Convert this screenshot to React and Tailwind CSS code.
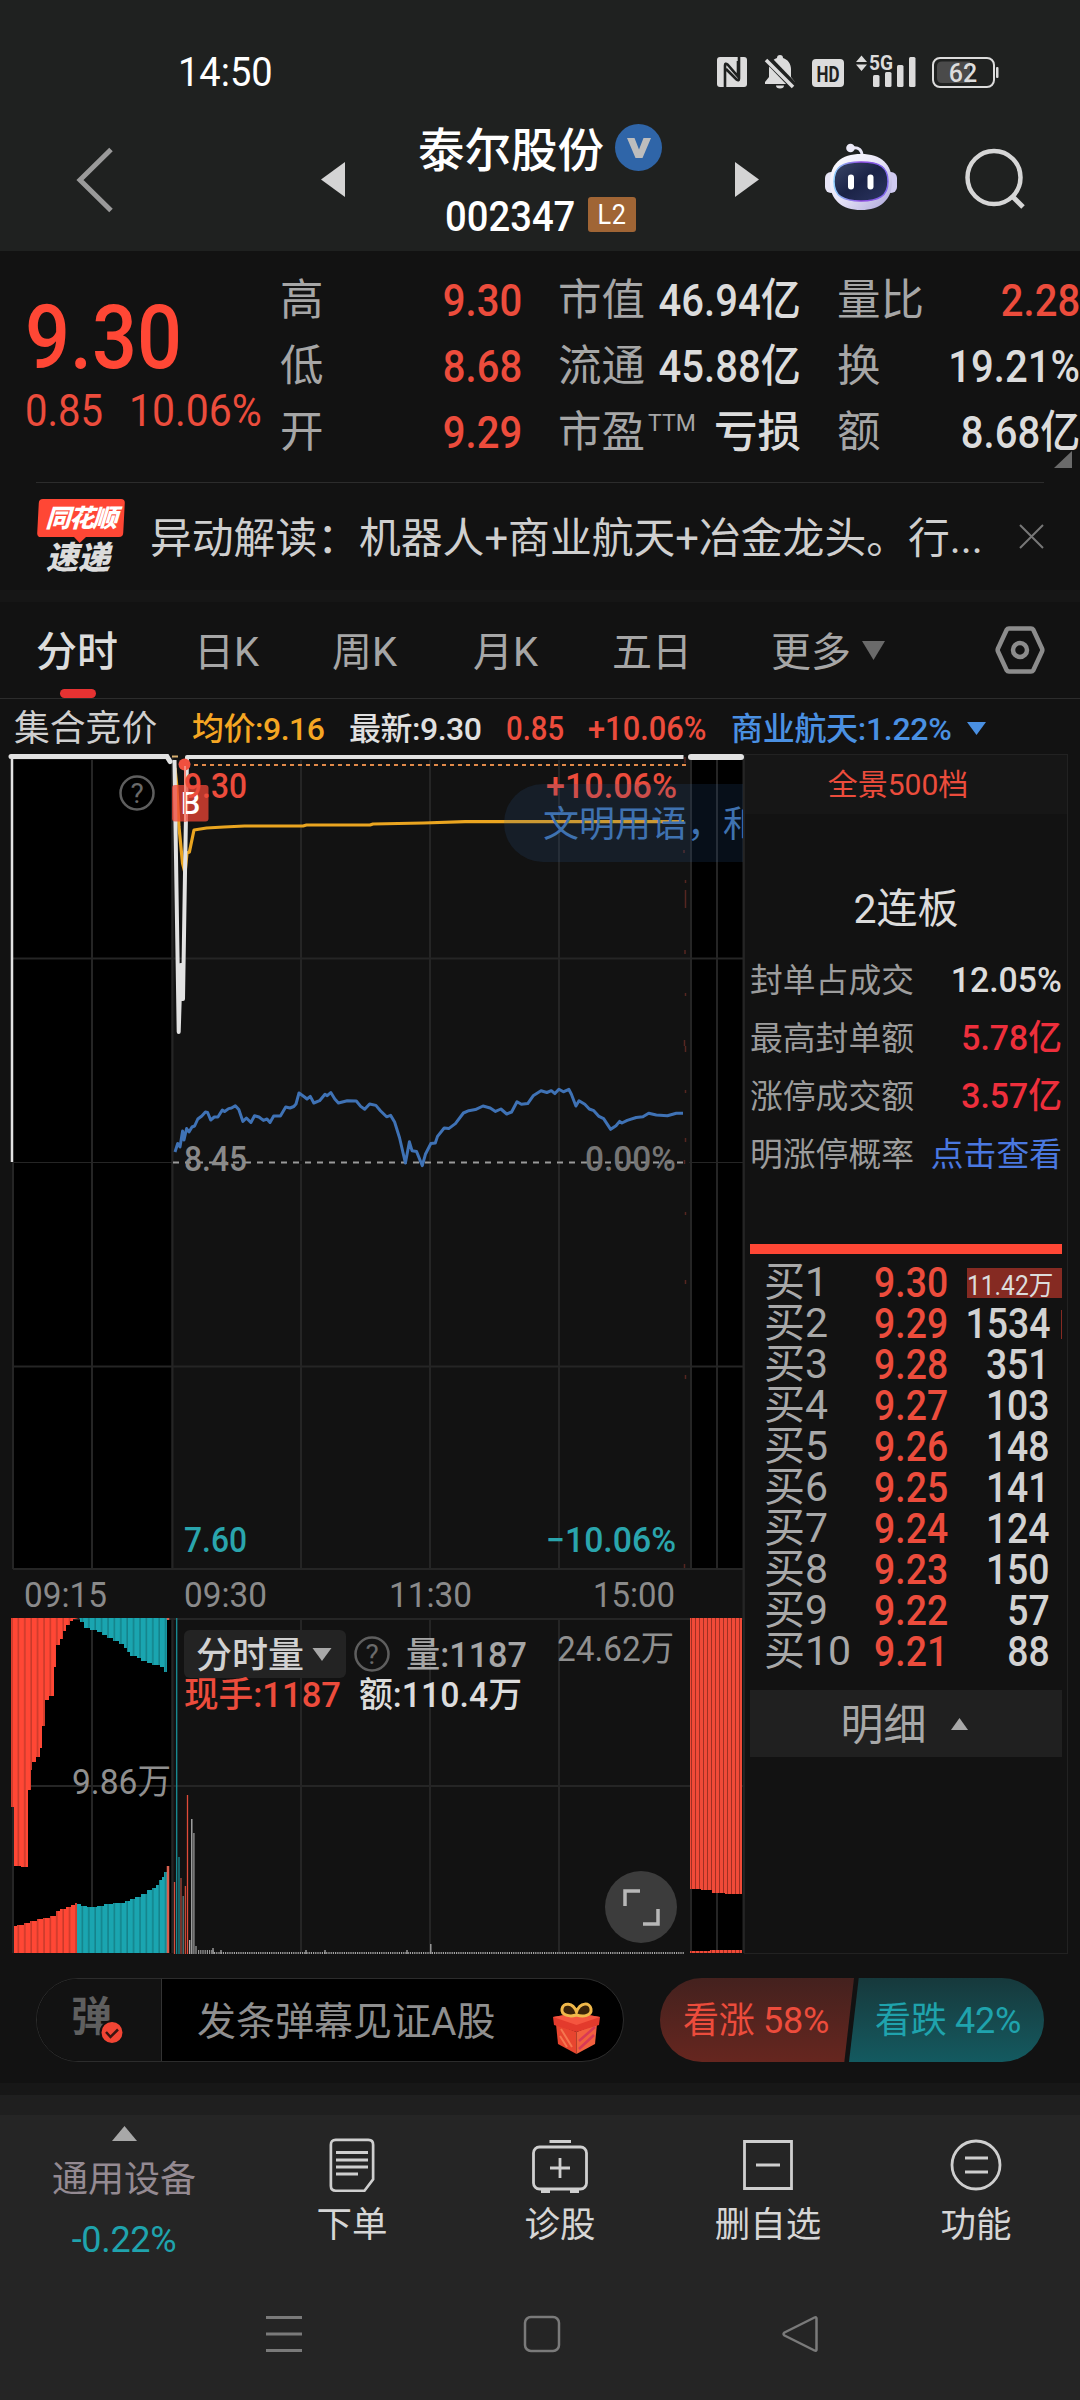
import clsx from 'clsx';

const quoteColumns = [
  {
    width: 'w-[242px]',
    rows: [
      { label: '高', value: '9.30', up: true },
      { label: '低', value: '8.68', up: true },
      { label: '开', value: '9.29', up: true },
    ],
  },
  {
    width: 'w-[243px] ml-[36px]',
    rows: [
      { label: '市值', value: '46.94亿' },
      { label: '流通', value: '45.88亿' },
      { label: '市盈', sup: 'TTM', value: '亏损', wide: true },
    ],
  },
  {
    width: 'w-[243px] ml-[36px]',
    rows: [
      { label: '量比', value: '2.28', up: true },
      { label: '换', value: '19.21%' },
      { label: '额', value: '8.68亿' },
    ],
  },
];

const tabs = [
  { name: '分时', className: 'w-[165px] pl-[36px] text-[41px]' },
  { name: '日K', className: 'w-[136px] pl-[29px]' },
  { name: '周K', className: 'w-[141px] pl-[31px]' },
  { name: '月K', className: 'w-[141px] pl-[31px]' },
  { name: '五日', className: 'w-[160px] pl-[29px]' },
];

const limitStats = [
  { label: '封单占成交', value: '12.05%', color: 'text-[#dcdcdc]' },
  { label: '最高封单额', value: '5.78亿', color: 'text-[#ee2f3c]' },
  { label: '涨停成交额', value: '3.57亿', color: 'text-[#ee2f3c]' },
];

const bids = [
  ['买1', '9.30', '11.42万'],
  ['买2', '9.29', '1534'],
  ['买3', '9.28', '351'],
  ['买4', '9.27', '103'],
  ['买5', '9.26', '148'],
  ['买6', '9.25', '141'],
  ['买7', '9.24', '124'],
  ['买8', '9.23', '150'],
  ['买9', '9.22', '57'],
  ['买10', '9.21', '88'],
];

const sectorLine =
  '175,1152 177.7,1143.5 180,1147 182.6,1131 184,1140 186.6,1128.5 189,1132 192,1127 194.6,1126 197.8,1119 201.8,1116 205.4,1112 207.6,1112.5 210.7,1120 214.3,1117 217.9,1117 222.3,1110 224.6,1111.5 228.6,1108.6 231.5,1108 235.3,1105.7 238.8,1109.6 242.9,1121.4 246.4,1118 250.9,1122.5 254.5,1115.7 259,1117 263.4,1120.4 267,1119 270,1122.5 273.7,1116 280.4,1116 285.7,1107 290,1108 293.8,1106.5 296,1104 299,1093 304.5,1097 307,1099 310.3,1096.4 313.8,1103 319.6,1100.7 325,1094.3 327.2,1095.7 330.8,1092.5 334.8,1099 338.4,1103 347.3,1100.7 356.3,1101 360.7,1106.4 364.7,1109.3 369.6,1104 375.9,1105.4 380.4,1110.7 386.6,1116.8 390.6,1115.4 394.6,1122 399.6,1138 405.4,1163 409.4,1141.8 412,1150.7 416.5,1151.4 422.3,1165.7 425.4,1154.3 430.8,1143.6 435.3,1143 437.5,1136.4 444.2,1128 448.7,1128.6 455.4,1123.6 463.4,1113 468.8,1110.7 475.4,1109.6 483,1106 490.2,1108 495.5,1111.4 500.9,1109 506.7,1114 511.6,1112 517,1101.8 521.4,1104.3 527.7,1103.6 533.5,1095.4 541,1090.7 546.9,1092.5 551.3,1090.7 554.9,1093.6 558.9,1089.3 563.4,1091.8 568.8,1089.3 571.4,1094.3 575.9,1106 579,1100.7 584.8,1104.3 589.3,1109 593.8,1110.7 599,1116.4 603.6,1118.6 610.7,1129.3 616,1125.7 619.6,1121.4 621.9,1123 627.2,1120.4 636.2,1117.5 642.9,1116.8 648.7,1113.2 656.3,1115 667.4,1115.7 676.3,1113.2 683,1113.2';

const averageLine =
  '175,768 176.7,785 179,827 182.5,863 185,873 187,853 189.4,852 194,830 206.6,828 224,827 244.5,826 303,826 306.5,825 370,825 373,824 423.6,823 465,821.7 684,821.7';

// [x, top, color]
const openingBars = [
  [174.5, 1882, '#d0503f'],
  [176.7, 1618, '#1a8f98'],
  [179, 1857, '#1a8f98'],
  [181, 1878, '#a5493e'],
  [183.2, 1896, '#5c7f80'],
  [185.4, 1886, '#c94635'],
  [187.5, 1795, '#e04a38'],
  [189.7, 1940, '#b5b5b5'],
  [191.8, 1819, '#b5b5b5'],
  [193.9, 1833, '#999'],
  [196, 1946, '#999'],
  [213, 1948, '#aaa'],
  [221, 1950, '#aaa'],
  [306, 1950, '#aaa'],
  [325, 1950, '#aaa'],
  [407, 1950, '#aaa'],
  [430.8, 1944, '#aaa'],
];

function Num({ className, right, wide, children }) {
  return (
    <span
      className={clsx(
        'inline-block whitespace-nowrap',
        wide ? 'scale-x-[0.95]' : 'scale-x-[0.89]',
        right ? 'origin-right' : 'origin-left',
        className
      )}
    >
      {children}
    </span>
  );
}

function StatusIcons() {
  return (
    <svg width="284" height="40" viewBox="716 52 284 40" fill="#dcdcdc">
      <rect x="717" y="57" width="30" height="30" rx="3" />
      <path d="M725 87V65.500q0-3 2.500-1L738 76.500V61M739 57v21.500q0 3-2.500 1L726 69" fill="none" stroke="#1f2120" strokeWidth="2.600" />
      <path d="M780 55a3 3 0 0 1 3 3c5 1.500 8 6 8 11v8l4 5v2h-30v-2l4-5v-8c0-5 3-9.500 8-11a3 3 0 0 1 3-3z" />
      <path d="M776 85.500h8a4 3 0 0 1-8 0z" />
      <path d="M766 57.500l28 29" stroke="#1f2120" strokeWidth="8" />
      <path d="M766 60l27 27" stroke="#dcdcdc" strokeWidth="3.500" />
      <rect x="812" y="59" width="32" height="28" rx="4" />
      <text x="828" y="81.500" textAnchor="middle" fontSize="22" fontWeight="700" fill="#1f2120" textLength="23" lengthAdjust="spacingAndGlyphs">HD</text>
      <path d="M856 62l5.500-6.500 5.500 6.500zM856 64.500h11l-5.500 6.500z" />
      <text x="869" y="70" fontSize="20" fontWeight="700" textLength="24" lengthAdjust="spacingAndGlyphs">5G</text>
      <rect x="873" y="75" width="6.500" height="12" rx="1.500" />
      <rect x="885" y="72" width="6.500" height="15" rx="1.500" />
      <rect x="897" y="65" width="6.500" height="22" rx="1.500" />
      <rect x="909" y="57" width="6.500" height="30" rx="1.500" />
      <rect x="933" y="58" width="61" height="29" rx="7" fill="none" stroke="#dcdcdc" strokeWidth="2" />
      <path d="M942 61.500h28v21.500h-28q-5 0-5-5v-11.500q0-5 5-5z" fill="#4a4a4a" />
      <rect x="996" y="67" width="2.500" height="11" rx="1" />
      <text x="963" y="81.500" textAnchor="middle" fontSize="25" fontWeight="500">62</text>
    </svg>
  );
}

function Robot() {
  return (
    <svg width="74" height="68" viewBox="0 0 74 68">
      <defs>
        <linearGradient id="shell" x1="0" y1="0" x2="1" y2="1">
          <stop offset="0" stopColor="#fff" />
          <stop offset="0.5" stopColor="#e6e3f7" />
          <stop offset="1" stopColor="#a9a3d8" />
        </linearGradient>
        <linearGradient id="visor" x1="0" y1="0" x2="1" y2="1">
          <stop offset="0" stopColor="#3b4667" />
          <stop offset="0.5" stopColor="#1b2347" />
          <stop offset="1" stopColor="#2b3560" />
        </linearGradient>
        <linearGradient id="rim" x1="0" y1="0" x2="1" y2="0">
          <stop offset="0" stopColor="#8fd0ff" />
          <stop offset="0.5" stopColor="#8e4be0" />
          <stop offset="1" stopColor="#7f6bf0" />
        </linearGradient>
      </defs>
      <path d="M28 5c7-1 10 2 10 8" fill="none" stroke="#e8e6f6" strokeWidth="3" />
      <circle cx="26.500" cy="5" r="4.300" fill="#eceaf8" />
      <rect x="1" y="29" width="12" height="21" rx="6" fill="#e6e4f5" />
      <rect x="61" y="29" width="12" height="21" rx="6" fill="#cfcaf0" />
      <path d="M37 11c20 0 31 10 31 28S56 67 37 67 6 57 6 39s11-28 31-28z" fill="url(#shell)" />
      <path d="M37 19c19 0 27 5 27 19.500S55 58 37 58 10 53 10 38.500 18 19 37 19z" fill="url(#visor)" stroke="url(#rim)" strokeWidth="1.500" />
      <rect x="24" y="31.500" width="6" height="15" rx="3" fill="#fff" />
      <rect x="43.500" y="31.500" width="6" height="15" rx="3" fill="#fff" />
    </svg>
  );
}

function Header() {
  return (
    <header className="h-[251px] bg-[#1f2120] text-white">
      <div className="flex h-[104px] items-start justify-between pl-[178px] pr-[80px] pt-[52px]">
        <Num wide className="text-[40px] leading-[42px]">14:50</Num>
        <StatusIcons />
      </div>
      <div className="flex h-[147px] items-start">
        <svg className="ml-[74px] mt-[43px]" width="42" height="66" viewBox="0 0 42 66" fill="none" stroke="#9a9a9a" strokeWidth="5">
          <path d="M37 2.500L6 33l31 30.500" />
        </svg>
        <svg className="ml-[205px] mt-[58px]" width="24" height="35" viewBox="0 0 24 35" fill="#d4d4d4">
          <path d="M24 0v35L0 17.500z" />
        </svg>
        <div className="flex w-[390px] flex-col">
          <div className="flex items-start pl-[73px] pt-[20px]">
            <span className="mt-[2px] text-[46.5px] font-medium leading-[50px]">泰尔股份</span>
            <span className="ml-[11px] flex size-[47px] items-center justify-center rounded-full bg-[#2f65a8]">
              <svg width="24" height="20" viewBox="0 0 24 20" fill="#bdbdbd">
                <path d="M0 0h7.500L12 11.500 16.500 0H24L15.500 20h-7z" />
              </svg>
            </span>
          </div>
          <div className="flex items-start pl-[100px] pt-[21px]">
            <span className="w-[143px]">
              <Num className="scale-x-[0.91] text-[42px] font-medium leading-[39px]">002347</Num>
            </span>
            <span className="flex h-[35px] w-[48px] items-center justify-center rounded-[3px] bg-[#a06535]">
              <span className="scale-x-90 text-[28px] leading-none tracking-wide">L2</span>
            </span>
          </div>
        </div>
        <svg className="mt-[58px]" width="24" height="35" viewBox="0 0 24 35" fill="#d4d4d4">
          <path d="M0 0v35l24-17.500z" />
        </svg>
        <div className="ml-[65px] mt-[39px]">
          <Robot />
        </div>
        <svg className="ml-[66px] mt-[43px]" width="64" height="64" viewBox="0 0 64 64" fill="none" stroke="#d6d6d6" strokeWidth="4.500">
          <circle cx="30" cy="30.500" r="26.500" />
          <path d="M48 49l11 11" strokeWidth="5" />
        </svg>
      </div>
    </header>
  );
}

function Quote() {
  return (
    <section className="h-[232px]">
      <div className="flex h-[231px]">
        <div className="flex w-[280px] flex-col pl-[25px] text-[#ff4735]">
          <Num className="mt-[42px] w-[150px] text-[89px] font-medium leading-[90px]">9.30</Num>
          <div className="mt-[3px] flex text-[45px] leading-[50px] text-[#ec4c3c]">
            <span className="w-[104px]">
              <Num>0.85</Num>
            </span>
            <Num className="scale-x-[0.91]">10.06%</Num>
          </div>
        </div>
        {quoteColumns.map((col, i) => (
          <div key={i} className={clsx('flex shrink-0 flex-col pt-[17px]', col.width)}>
            {col.rows.map((row) => (
              <div key={row.label} className="flex h-[66px] items-center justify-between whitespace-nowrap text-[43.5px] leading-[66px]">
                <span className="flex shrink-0 text-[#a6a6a6]">
                  {row.label}
                  {row.sup && <span className="ml-[3px] mt-[-9px] text-[23px]">{row.sup}</span>}
                </span>
                {row.wide ? (
                  <span className="font-medium text-[#dcdcdc]">{row.value}</span>
                ) : (
                  // the unscaled box may be wider than the room left by the label
                  <span className="flex w-0 grow justify-end">
                    <Num right className={clsx('text-[45px] font-medium', row.up ? 'text-[#ec4c3c]' : 'text-[#dcdcdc]')}>
                      {row.value}
                    </Num>
                  </span>
                )}
              </div>
            ))}
          </div>
        ))}
        <svg className="absolute left-[1054px] top-[451px]" width="18" height="17" viewBox="0 0 18 17" fill="#6a6a6a">
          <path d="M18 0v17H0z" />
        </svg>
      </div>
      <div className="mx-[36px] h-px bg-[#2c2c2c]" />
    </section>
  );
}

function News() {
  return (
    <section className="flex h-[107px] items-start">
      <div className="ml-[36px] mt-[16px] flex w-[90px] flex-col items-center italic">
        <div className="relative flex h-[38px] w-[86px] -skew-x-3 items-center justify-center rounded-[4px] bg-[#ff4735] text-[25px] font-black leading-none tracking-[-1.5px] text-white">
          同花顺
          <svg className="absolute left-[36px] top-[37px]" width="14" height="7" viewBox="0 0 14 7" fill="#ff4735">
            <path d="M0 0h14L7 7z" />
          </svg>
        </div>
        <div className="mt-[4px] pr-[6px] text-[32px] font-black leading-[34px] text-[#dcdcdc]">速递</div>
      </div>
      <div className="ml-[24px] mt-[31px] w-[868px] whitespace-nowrap text-[41.8px] leading-[50px] text-[#cfcfcf]">
        异动解读：机器人+商业航天+冶金龙头。行...
      </div>
      <svg className="mt-[40px]" width="27" height="27" viewBox="0 0 27 27" fill="none" stroke="#777" strokeWidth="2">
        <path d="M2 2l23 23M25 2L2 25" />
      </svg>
    </section>
  );
}

function Tabs() {
  return (
    <nav className="flex h-[97px] border-b border-[#2c2c2c] text-[40px] leading-[101px] text-[#a6a6a6]">
      {tabs.map((tab, i) => (
        <div key={tab.name} className={clsx('relative shrink-0 whitespace-nowrap', tab.className, i === 0 && 'font-medium text-[#dcdcdc]')}>
          {tab.name}
          {i === 0 && <span className="absolute bottom-0 left-[60px] h-[9px] w-[36px] rounded-full bg-[#e63232]" />}
        </div>
      ))}
      <div className="flex w-[225px] items-start pl-[28px]">
        更多
        <svg className="ml-[11px] mt-[39px]" width="23" height="19" viewBox="0 0 23 19" fill="#6a6a6a">
          <path d="M0 0h23L11.500 19z" />
        </svg>
      </div>
      <svg className="ml-[27px] mt-[24px]" width="50" height="48" viewBox="0 0 50 48" fill="none" stroke="#8c8c8c" strokeWidth="4.500" strokeLinejoin="round">
        <path d="M14 2.500h22q1.500 0 2.300 1.300L47 22.500q.7 1.500 0 3L38.300 44.200Q37.500 45.500 36 45.500H14q-1.500 0-2.300-1.300L3 25.500q-.7-1.500 0-3L11.700 3.800Q12.500 2.500 14 2.500z" />
        <circle cx="25" cy="24" r="7" />
      </svg>
    </nav>
  );
}

function Legend() {
  return (
    <div className="flex h-[55px] items-start whitespace-nowrap text-[32px] font-medium leading-[60px]">
      <span className="w-[192px] pl-[14px] text-[35.8px] font-normal leading-[61px] text-[#cfcfcf]">集合竞价</span>
      <span className="w-[157px] tracking-[-0.5px] text-[#f5a623]">均价:9.16</span>
      <span className="w-[157px] tracking-[-0.5px] text-[#e0e0e0]">最新:9.30</span>
      <span className="w-[82px] text-[#ec4c3c]">
        <Num className="text-[33px]">0.85</Num>
      </span>
      <span className="w-[143px] text-[#ec4c3c]">
        <Num className="scale-x-[0.92] text-[33.5px]">+10.06%</Num>
      </span>
      <span className="w-[224px] tracking-[-0.3px] text-[#4a90e2]">商业航天:1.22%</span>
      <svg className="ml-[12px] mt-[23px]" width="19" height="13" viewBox="0 0 19 13" fill="#4a90e2">
        <path d="M0 0h19L9.500 13z" />
      </svg>
    </div>
  );
}

function Label({ x, y, w, fill, size = 35, weight = 500, children }) {
  return (
    <text x={x} y={y} fontSize={size} fontWeight={weight} fill={fill} textLength={w} lengthAdjust="spacingAndGlyphs">
      {children}
    </text>
  );
}

function Chart() {
  return (
    <svg className="block shrink-0" width="744" height="1201" viewBox="0 754 744 1201">
      <defs>
        <pattern id="redStripe" width="6.400" height="10" patternUnits="userSpaceOnUse">
          <rect width="6.400" height="10" fill="#ff4735" />
          <rect x="5" width="1.200" height="10" fill="#b93628" />
        </pattern>
        <pattern id="tealStripe" width="6.400" height="10" patternUnits="userSpaceOnUse">
          <rect width="6.400" height="10" fill="#1aa5b0" />
          <rect x="5" width="1.200" height="10" fill="#127880" />
        </pattern>
        <pattern id="tailStripe" width="4" height="10" patternUnits="userSpaceOnUse">
          <rect width="4" height="10" fill="#f04a38" />
          <rect x="3" width="1" height="10" fill="#9f2f22" />
        </pattern>
        <clipPath id="plot">
          <rect x="12" y="754" width="731" height="1201" />
        </clipPath>
      </defs>

      {/* call auction zones */}
      <g fill="#000">
        <rect x="13" y="760" width="158" height="809" />
        <rect x="690" y="760" width="53" height="809" />
        <rect x="13" y="1619" width="158" height="334" />
        <rect x="690" y="1619" width="53" height="334" />
      </g>

      <g stroke="#252525" strokeWidth="2">
        {[92, 301, 430, 559, 717].map((x) => (
          <path key={x} d={`M${x} 760V1569M${x} 1619V1953`} />
        ))}
        {[958.5, 1162.5, 1366.5, 1569, 1619, 1786].map((y) => (
          <path key={y} d={`M13 ${y}H744`} strokeWidth={y === 1162.5 ? 1 : 2} />
        ))}
        <path d="M172.500 757V1569M172.500 1619V1953M691 760V1569M691 1619V1953M743.500 757V1953M13 1162V1569M13 1619V1953" strokeWidth="2" />
      </g>
      <rect x="174" y="1161" width="515" height="3" fill="#121212" />
      <path d="M173 1162.500H684" stroke="#9a9a9a" strokeWidth="2" strokeDasharray="6 6" />

      <path d="M685 757v6M684 850v3M685.500 880v3M685.500 890v18M685 950v4M685.500 993v3M684.500 1040v6M685.500 1046v6M685.500 1090v3M685.500 1138v4M684.500 1160v4M685.500 1212v3M685.500 1280v4M685.500 1375v4M684.500 1564v4" stroke="#552620" strokeWidth="1.500" />

      {/* prices */}
      <path d="M12 758V1162" stroke="#e2e2e2" strokeWidth="2.500" />
      <path d="M11 756.500H167l3 5" fill="none" stroke="#e2e2e2" strokeWidth="5" strokeLinecap="round" />
      <path d="M691 757H741" stroke="#e2e2e2" strokeWidth="6" strokeLinecap="round" />
      <path d="M186 765H689" stroke="#e08a4a" strokeWidth="2" strokeDasharray="4 4" />
      <path d="M172 756.500h6" stroke="#d8b070" strokeWidth="2" />
      <polyline points={averageLine} fill="none" stroke="#eaa520" strokeWidth="3.200" strokeLinejoin="round" />
      <polyline points="174.5,760 178.7,1032 180.8,965 183,999 185,873 187,757 683.500,757" fill="none" stroke="#e2e2e2" strokeWidth="4" strokeLinejoin="round" />
      <polyline points={sectorLine} fill="none" stroke="#3f72b5" strokeWidth="3" strokeLinejoin="round" />

      <circle cx="137" cy="793" r="16.500" fill="none" stroke="#5e5e5e" strokeWidth="2.500" />
      <text x="137" y="803" fontSize="28" fill="#6a6a6a" textAnchor="middle">?</text>

      <circle cx="184.500" cy="764.500" r="6" fill="#f0503f" />
      <rect x="172" y="785" width="36.500" height="36.500" rx="3" fill="#f04535" fillOpacity="0.75" />
      <text x="190.500" y="813.500" fontSize="31" fontWeight="500" fill="#fff" textAnchor="middle">B</text>
      <path d="M185 766V822" stroke="#f58a7c" strokeWidth="2" />

      <Label x={184} y={798} w={63} fill="#ec4c3c">9.30</Label>
      <Label x={546} y={798} w={131} fill="#ec4c3c">+10.06%</Label>
      <Label x={184} y={1171} w={63} fill="#8a8a8a">8.45</Label>
      <Label x={585} y={1171} w={91} fill="#757575">0.00%</Label>
      <Label x={184} y={1552} w={63} fill="#2aa5ad">7.60</Label>
      <Label x={546} y={1552} w={130} fill="#2aa5ad">−10.06%</Label>

      <g clipPath="url(#plot)">
        <rect x="504" y="784" width="300" height="78" rx="39" fill="#2a5c9c" fillOpacity="0.16" />
        <text x="543" y="837" fontSize="36" fill="#3f72b0">文明用语，和</text>
      </g>

      <Label x={24} y={1607} w={83} fill="#8a8a8a" weight={400}>09:15</Label>
      <Label x={184} y={1607} w={83} fill="#8a8a8a" weight={400}>09:30</Label>
      <Label x={389} y={1607} w={83} fill="#8a8a8a" weight={400}>11:30</Label>
      <Label x={593} y={1607} w={82} fill="#8a8a8a" weight={400}>15:00</Label>

      {/* volume */}
      <path
        d="M11 1618H78L76 1619H73V1621H70V1625H66V1631H63V1639H60V1645H56V1667H54V1696H49V1700H45V1726H42V1748H40V1757H36V1762H32V1770H31V1790H28V1867H21V1866H14V1807H11z"
        fill="url(#redStripe)"
      />
      <path
        d="M79 1618H167V1672H164V1667H160V1665H152V1663H147V1661H141V1658H137V1656H130V1652H127V1648H124V1644H119V1641H113V1638H107V1635H102V1632H97V1630H90V1628H84V1622H80V1619z"
        fill="url(#tealStripe)"
      />
      <path
        d="M14 1953V1926H17V1925H24V1923H30V1921H37V1919H43V1918H50V1916H56V1911H60V1909H66V1907H71V1905H75V1903H77V1953z"
        fill="url(#redStripe)"
      />
      <path
        d="M77 1953V1904H81V1906H87V1907H97V1906H104V1904H113V1903H125V1901H130V1899H135V1897H141V1894H147V1890H152V1888H156V1885H159V1880H162V1877H164V1872H167V1953z"
        fill="url(#tealStripe)"
      />
      <path d="M168 1866V1953M168 1618v2" stroke="#d8604f" strokeWidth="2.500" />
      <path d="M690 1618H742V1894H725V1893H712V1890H701V1889H690zM690 1953v-2h20v-1h32v3z" fill="url(#tailStripe)" />
      {openingBars.map(([x, top, color]) => (
        <path key={x} d={`M${x} ${top}V1954`} stroke={color} strokeWidth="1.300" />
      ))}
      <path d="M198 1952H214" stroke="#999" strokeWidth="4" strokeDasharray="1.200 1" />
      <path d="M214 1953H684" stroke="#a5a5a5" strokeWidth="2" strokeDasharray="1.200 1" />

      <Label x={72} y={1794} w={99} fill="#8f8f8f" weight={400}>9.86万</Label>
      <Label x={557} y={1661} w={117} fill="#8f8f8f" weight={400}>24.62万</Label>

      <rect x="184" y="1630" width="162" height="48" rx="6" fill="#232323" />
      <Label x={196} y={1668} w={108} fill="#d2d2d2" size={36}>分时量</Label>
      <path d="M312.500 1648h19l-9.500 13z" fill="#a8a8a8" />
      <circle cx="372" cy="1654" r="16.500" fill="none" stroke="#5e5e5e" strokeWidth="2.500" />
      <text x="372" y="1664" fontSize="28" fill="#6a6a6a" textAnchor="middle">?</text>
      <Label x={406} y={1667} w={121} fill="#a6a6a6">量:1187</Label>
      <Label x={184} y={1707} w={157} fill="#ec4c3c">现手:1187</Label>
      <Label x={359} y={1707} w={163} fill="#dcdcdc">额:110.4万</Label>

      <circle cx="641" cy="1907" r="36" fill="#3c3c3c" />
      <path d="M625 1906V1891H640M643 1924H658V1909" fill="none" stroke="#b8b8b8" strokeWidth="3.500" />
    </svg>
  );
}

function OrderBook() {
  return (
    <aside className="flex h-[1200px] w-[324px] flex-col border border-[#222]">
      <div className="flex h-[59px] items-center justify-center bg-[#161616] pr-[16px] text-[30px] text-[#ec4c3c]">全景500档</div>
      <div className="mt-[60px] h-[70px] text-center text-[41px] leading-[70px] text-[#dcdcdc]">2连板</div>
      <div className="mt-[8px] flex flex-col pl-[5px] pr-[5px] text-[32.8px] leading-[58px]">
        {limitStats.map((item) => (
          <div key={item.label} className="flex h-[58px] items-start justify-between text-[#9c9c9c]">
            {item.label}
            <Num right wide className={clsx('-mt-px text-[35.5px] font-medium', item.color)}>
              {item.value}
            </Num>
          </div>
        ))}
        <div className="flex h-[58px] items-start justify-between text-[#9c9c9c]">
          明涨停概率
          <span className="text-[32.8px] text-[#4a78e0]">点击查看</span>
        </div>
      </div>
      <div className="mx-[5px] mt-[60px] h-[10px] shrink-0 bg-[#ff4735]" />
      <div className="mt-[8px] flex flex-col pl-[5px]">
        {bids.map(([name, price, amount], i) => (
          <div key={name} className="flex h-[41px] items-start leading-[41px]">
            <span className="w-[124px] whitespace-nowrap pl-[14px] text-[41px] text-[#a8a8a8]">{name}</span>
            <span className="w-[93px]">
              <Num className="text-[42px] font-medium text-[#ec4c3c]">{price}</Num>
            </span>
            {i === 0 ? (
              <span className="mt-[6px] flex h-[30px] w-[95px] items-center bg-[#852a22] pt-[6px] text-[#dcdcdc]">
                <Num className="scale-x-[0.91] text-[27px]">{amount}</Num>
              </span>
            ) : (
              <span className="flex w-[95px] justify-end pr-[12px]">
                <Num right className="scale-x-[0.89] text-[42px] font-medium text-[#d2d2d2]">
                  {amount}
                </Num>
                {i === 1 && <span className="-mr-[12px] ml-[11px] mt-[7px] h-[29px] w-px shrink-0 bg-[#852a22]" />}
              </span>
            )}
          </div>
        ))}
      </div>
      <div className="mx-[5px] mt-[18px] flex h-[67px] items-center justify-center bg-[#202020] text-[43px] leading-none text-[#a8a8a8]">
        <span className="mt-[4px]">明细</span>
        <svg className="ml-[24px] mr-[4px]" width="17" height="12" viewBox="0 0 17 12" fill="#a8a8a8">
          <path d="M8.500 0L17 12H0z" />
        </svg>
      </div>
    </aside>
  );
}

function Gift() {
  return (
    <svg width="49" height="52" viewBox="0 0 49 52">
      <path d="M4 22l20.500 8v22L6 42z" fill="#e8452f" />
      <path d="M45 22l-20.500 8v22L43 42z" fill="#f2603f" />
      <path d="M1 15l23.500-4L48 15l-1 8-22.500 7L2 23z" fill="#e33a2c" />
      <path d="M1 15l23.500-4L48 15l-23.500 8z" fill="#f5553f" />
      <path d="M43 25L27 39M42 33L27 47" stroke="#d93a55" strokeWidth="2.500" />
      <path d="M9 27l11 18M8 34l7 11" stroke="#f5764f" strokeWidth="2" />
      <path d="M24.500 13C18 15 9 13.500 10 7S21 0 24.500 10C28 0 38 0 39 7s-8 8-14.500 6z" fill="#3a2208" stroke="#f0b84a" strokeWidth="3" />
    </svg>
  );
}

function Danmaku() {
  return (
    <section className="flex h-[128px] items-start pt-[23px]">
      <div className="ml-[36px] flex h-[84px] w-[588px] overflow-hidden rounded-[42px] border border-[#2c2c2c] bg-black">
        <div className="relative w-[125px] border-r border-[#333] bg-[#121212] pl-[34px] text-[41px] font-bold leading-[76px] text-[#5f5f5f]">
          弹
          <svg className="absolute left-[62px] top-[40px]" width="26" height="27" viewBox="0 0 26 27">
            <circle cx="13" cy="13.500" r="11.500" fill="#f24534" stroke="#121212" strokeWidth="2" />
            <path d="M7 13l4.500 5L19 10.500" fill="none" stroke="#3a1410" strokeWidth="2.500" />
          </svg>
        </div>
        <div className="flex flex-1 items-center justify-between pl-[35px] pr-[22px] text-[39px] text-[#8f8f8f]">
          <span className="mt-[5px] leading-none">发条弹幕见证A股</span>
          <div className="mt-[15px]">
            <Gift />
          </div>
        </div>
      </div>
      <div className="ml-[36px] flex h-[84px] w-[384px] text-[36px]">
        <div className="flex w-[194px] items-center rounded-l-[42px] bg-linear-to-b from-[#44211e] to-[#66261f] pl-[23px] text-[#ec4c3c] [clip-path:polygon(0_0,100%_0,95%_100%,0_100%)]">
          <span className="mt-[2px] whitespace-nowrap leading-none tracking-[-0.3px]">看涨 58%</span>
        </div>
        <div className="-ml-[5px] flex w-[195px] items-center rounded-r-[42px] bg-linear-to-b from-[#16393c] to-[#135a60] pl-[26px] text-[#1fa3ad] [clip-path:polygon(5%_0,100%_0,100%_100%,0_100%)]">
          <span className="mt-[2px] whitespace-nowrap leading-none tracking-[-0.3px]">看跌 42%</span>
        </div>
      </div>
    </section>
  );
}

const actions = [
  {
    name: '下单',
    icon: (
      <>
        <path d="M8 3h34q5 0 5 5v36l-9 12H8q-5 0-5-5V8q0-5 5-5z" transform="translate(4 1) scale(.96)" />
        <path d="M12 16.500h32M12 24h32M12 31h32M12 38h22" strokeWidth="3" />
      </>
    ),
  },
  {
    name: '诊股',
    icon: (
      <>
        <rect x="1.500" y="11" width="53" height="42" rx="6" />
        <path d="M17.500 5.500H39M28 22v20M18 32h20M9 55.500h9M38 55.500h9" />
      </>
    ),
  },
  {
    name: '删自选',
    icon: <path d="M4.500 5.500h47v47h-47zM16 29h24" />,
  },
  {
    name: '功能',
    icon: (
      <>
        <circle cx="28" cy="29" r="24" />
        <path d="M17 22h23M17 36h23" />
      </>
    ),
  },
];

function BottomNav() {
  return (
    <footer className="h-[285px] bg-[#252525]">
      <div className="flex h-[160px]">
        <div className="flex w-[248px] flex-col items-center pt-[11px]">
          <svg width="25" height="15" viewBox="0 0 25 15" fill="#a8a8a8">
            <path d="M12.500 0L25 15H0z" />
          </svg>
          <span className="mt-[19px] text-[36px] leading-[40px] text-[#948a92]">通用设备</span>
          <span className="mt-[20px] text-[36px] leading-[40px] tracking-[-0.3px] text-[#1fa3ad]">-0.22%</span>
        </div>
        {actions.map((item) => (
          <div key={item.name} className="flex w-[208px] flex-col items-center pt-[21px] text-[#d6d6d6]">
            <svg width="56" height="58" viewBox="0 0 56 58" fill="none" stroke="#cfcfcf" strokeWidth="2.800">
              {item.icon}
            </svg>
            <span className="mt-[11px] text-[35.5px] leading-[40px]">{item.name}</span>
          </div>
        ))}
      </div>
      <div className="flex items-center pl-[264px] pt-[39px]">
        <svg width="40" height="40" viewBox="0 0 40 40" stroke="#7a7a7a" strokeWidth="3">
          <path d="M2 3.500h36M2 20h36M2 36.500h36" />
        </svg>
        <svg className="ml-[218px]" width="40" height="40" viewBox="0 0 40 40" fill="none" stroke="#7a7a7a" strokeWidth="2.500">
          <rect x="3" y="3" width="34" height="34" rx="6" />
        </svg>
        <svg className="ml-[218px]" width="40" height="40" viewBox="0 0 40 40" fill="none" stroke="#7a7a7a" strokeWidth="2.500" strokeLinejoin="round">
          <path d="M36.500 4.500v31q0 2-2 1L4.500 21.500q-2-1.500 0-3L34.500 3.500q2-1 2 1z" />
        </svg>
      </div>
    </footer>
  );
}

export default function App() {
  return (
    <div className="relative flex h-[2400px] w-[1080px] flex-col overflow-hidden bg-[#121212] font-['Roboto','Noto_Sans_CJK_SC',sans-serif]">
      <Header />
      <Quote />
      <News />
      <div className="h-[12px] bg-[#161616]" />
      <Tabs />
      <Legend />
      <main className="flex h-[1201px] items-start">
        <Chart />
        <OrderBook />
      </main>
      <Danmaku />
      <div className="h-[12px] bg-[#171717]" />
      <div className="h-[20px] bg-[#1f1f1f]" />
      <BottomNav />
    </div>
  );
}
